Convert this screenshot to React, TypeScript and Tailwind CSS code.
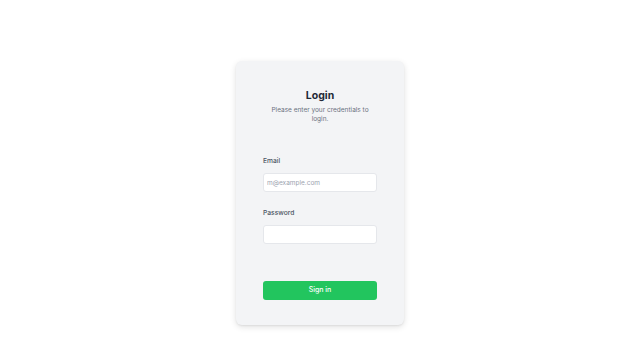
export default function App() {
  return (
    <div className="flex min-h-screen justify-center bg-white pt-[61px] font-['Inter',sans-serif] antialiased">
      <div className="h-[264px] w-[168px] rounded-[6px] bg-[#f3f4f6] px-[27px] pt-[28px] shadow-[0_2px_6px_rgba(0,0,0,0.12),0_1px_2px_rgba(0,0,0,0.06)]">
        <div className="text-center">
          <h1 className="text-[10.5px] font-bold leading-[14px] text-[#1f2937]">Login</h1>
          <p className="mt-[3px] text-[6.5px] leading-[9px] text-[#6b7280]">
            Please enter your credentials to login.
          </p>
        </div>

        <form className="mt-[32px]" onSubmit={(e) => e.preventDefault()}>
          <label className="block text-[6.7px] font-medium leading-[10px] text-[#4b5563]">Email</label>
          <input
            type="email"
            placeholder="m@example.com"
            className="mt-[7px] block h-[19px] w-full rounded-[3px] border border-[#e5e7eb] bg-white px-[3px] text-[6.5px] text-[#111827] outline-none placeholder:text-[#9ca3af]"
          />

          <label className="mt-[16px] block text-[6.7px] font-medium leading-[10px] text-[#4b5563]">
            Password
          </label>
          <input
            type="password"
            className="mt-[7px] block h-[19px] w-full rounded-[3px] border border-[#e5e7eb] bg-white px-[3px] text-[6.5px] outline-none"
          />

          <button
            type="submit"
            className="mt-[37px] block h-[19px] w-full rounded-[3px] bg-[#22c55e] text-[7px] font-medium text-white"
          >
            Sign in
          </button>
        </form>
      </div>
    </div>
  );
}
